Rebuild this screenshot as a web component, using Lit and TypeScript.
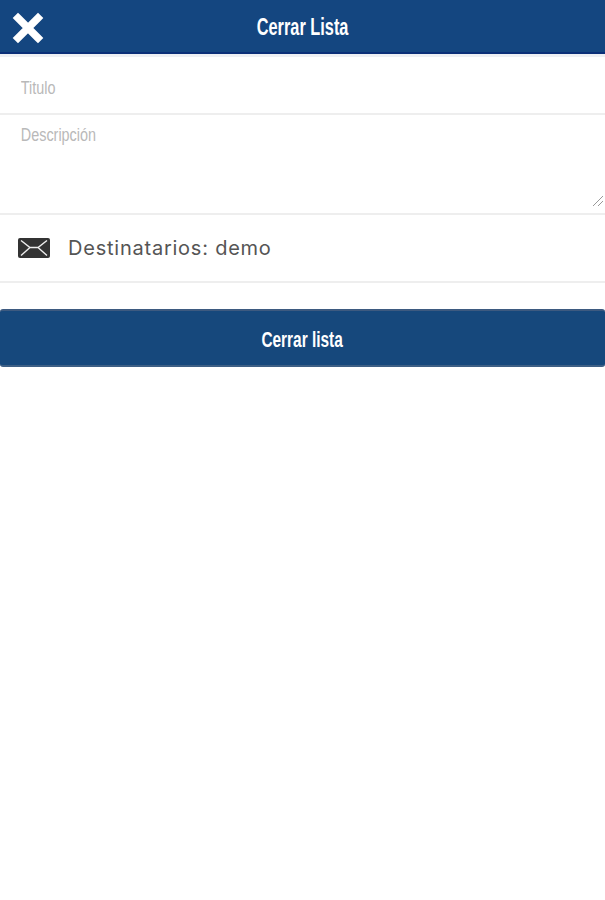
import { LitElement, html, css } from "lit";
import { customElement } from "lit/decorators.js";

@customElement("app-root")
export class AppRoot extends LitElement {
  static styles = css`
    :host { display: block; width: 605px; min-height: 900px; overflow: hidden; background: #fff; font-family: "Liberation Sans", sans-serif; }
    .header { height: 54px; box-sizing: border-box; background: #144680; border-bottom: 2px solid #0b2f78; display: flex; align-items: center; justify-content: center; position: relative; }
    .header h1 { margin: 2px 0 0; color: #fff; font-size: 23px; font-weight: 700; line-height: 1; transform: scaleX(0.71); white-space: nowrap; }
    .close { position: absolute; left: 12px; top: 12px; width: 32px; height: 32px; }
    .shadow { height: 3px; background: #eef0f4; }
    .row { border-bottom: 2px solid #eeeeee; position: relative; overflow: hidden; }
    .field { display: block; width: 125%; box-sizing: border-box; border: 0; outline: 0; margin: 0; padding: 0 26px; background: transparent; font-family: inherit; font-size: 18px; color: #333; transform: scaleX(0.8); transform-origin: left center; }
    .field::placeholder { color: #b9b9b9; opacity: 1; }
    input.field { height: 56px; padding-top: 6px; }
    textarea.field { height: 98px; padding-top: 10px; resize: none; line-height: 20px; }
    .grip { position: absolute; right: 1px; bottom: 6px; width: 12px; height: 12px; }
    .recipients { height: 68px; box-sizing: border-box; border-bottom: 2px solid #eeeeee; display: flex; align-items: center; gap: 18px; padding-left: 18px; }
    .recipients svg { width: 32px; height: 20px; flex: none; }
    .recipients span { font-family: Inter, sans-serif; font-size: 20px; color: #555; letter-spacing: 0.77px; }
    .actions { padding-top: 26px; }
    button { display: block; width: 100%; height: 58px; box-sizing: border-box; border: 0; border-top: 2px solid #3d5a80; border-bottom: 2px solid #3d5f85; border-radius: 3px; background: #16487c; color: #fff; font-family: inherit; font-size: 22px; font-weight: 700; padding: 4px 0 0; }
    button span { display: inline-block; transform: scaleX(0.7); white-space: nowrap; }
  `;

  render() {
    return html`
      <header class="header">
        <svg class="close" viewBox="0 0 32 32" aria-label="Cerrar">
          <path d="M6 6 L26 26 M26 6 L6 26" stroke="#fff" stroke-width="7.5" stroke-linecap="square"></path>
        </svg>
        <h1>Cerrar Lista</h1>
      </header>
      <div class="shadow"></div>
      <div class="row"><input class="field" placeholder="Titulo" /></div>
      <div class="row">
        <textarea class="field" placeholder="Descripción"></textarea>
        <svg class="grip" viewBox="0 0 12 12" aria-hidden="true">
          <path d="M1 11 L11 1 M6 11 L11 6" stroke="#999" stroke-width="1" fill="none"></path>
        </svg>
      </div>
      <div class="recipients">
        <svg viewBox="0 0 32 20" aria-hidden="true">
          <rect width="32" height="20" rx="2" fill="#333"></rect>
          <path d="M3 2.5 L12 9.5 L20 9.5 L29 2.5 M3 17.5 L12 9.5 M29 17.5 L20 9.5" fill="none" stroke="#eee" stroke-width="1.4"></path>
        </svg>
        <span>Destinatarios: demo</span>
      </div>
      <div class="actions"><button><span>Cerrar lista</span></button></div>
    `;
  }
}
